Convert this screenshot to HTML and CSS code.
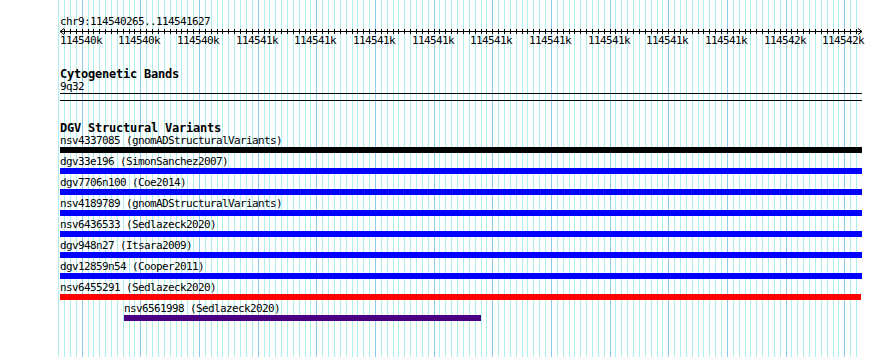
FILE: index.html
```html
<!DOCTYPE html>
<html>
<head>
<meta charset="utf-8">
<link rel="stylesheet" href="styles.css">
</head>
<body>
<div class="panel">
  <svg class="grid" width="890" height="357" viewBox="0 0 890 357" shape-rendering="crispEdges">
    <path class="minor" d="M58.5 0V357M64.5 0V357M70.5 0V357M76.5 0V357M88.5 0V357M93.5 0V357M99.5 0V357M105.5 0V357M111.5 0V357M117.5 0V357M123.5 0V357M129.5 0V357M134.5 0V357M146.5 0V357M152.5 0V357M158.5 0V357M164.5 0V357M170.5 0V357M176.5 0V357M181.5 0V357M187.5 0V357M193.5 0V357M205.5 0V357M211.5 0V357M217.5 0V357M222.5 0V357M228.5 0V357M234.5 0V357M240.5 0V357M246.5 0V357M252.5 0V357M264.5 0V357M269.5 0V357M275.5 0V357M281.5 0V357M287.5 0V357M293.5 0V357M299.5 0V357M305.5 0V357M310.5 0V357M322.5 0V357M328.5 0V357M334.5 0V357M340.5 0V357M346.5 0V357M352.5 0V357M357.5 0V357M363.5 0V357M369.5 0V357M381.5 0V357M387.5 0V357M393.5 0V357M398.5 0V357M404.5 0V357M410.5 0V357M416.5 0V357M422.5 0V357M428.5 0V357M439.5 0V357M445.5 0V357M451.5 0V357M457.5 0V357M463.5 0V357M469.5 0V357M475.5 0V357M481.5 0V357M486.5 0V357M498.5 0V357M504.5 0V357M510.5 0V357M516.5 0V357M522.5 0V357M527.5 0V357M533.5 0V357M539.5 0V357M545.5 0V357M557.5 0V357M563.5 0V357M569.5 0V357M574.5 0V357M580.5 0V357M586.5 0V357M592.5 0V357M598.5 0V357M604.5 0V357M615.5 0V357M621.5 0V357M627.5 0V357M633.5 0V357M639.5 0V357M645.5 0V357M651.5 0V357M657.5 0V357M662.5 0V357M674.5 0V357M680.5 0V357M686.5 0V357M692.5 0V357M698.5 0V357M703.5 0V357M709.5 0V357M715.5 0V357M721.5 0V357M733.5 0V357M739.5 0V357M745.5 0V357M750.5 0V357M756.5 0V357M762.5 0V357M768.5 0V357M774.5 0V357M780.5 0V357M791.5 0V357M797.5 0V357M803.5 0V357M809.5 0V357M815.5 0V357M821.5 0V357M827.5 0V357M833.5 0V357M838.5 0V357M850.5 0V357M856.5 0V357"/>
    <path class="major" d="M82.5 0V357M140.5 0V357M199.5 0V357M258.5 0V357M316.5 0V357M375.5 0V357M434.5 0V357M492.5 0V357M551.5 0V357M610.5 0V357M668.5 0V357M727.5 0V357M786.5 0V357M844.5 0V357"/>
  </svg>
  <div class="content">
    <div class="locus txt">chr9:114540265..114541627</div>
    <svg class="ruler" width="890" height="20" viewBox="0 0 890 20">
      <path class="rline" shape-rendering="crispEdges" d="M60 3.5H862"/>
      <path class="rline" shape-rendering="crispEdges" d="M64.5 1V6M70.5 1V6M76.5 1V6M82.5 1V6M88.5 1V6M93.5 1V6M99.5 1V6M105.5 1V6M111.5 1V6M117.5 1V6M123.5 1V6M129.5 1V6M134.5 1V6M140.5 1V6M146.5 1V6M152.5 1V6M158.5 1V6M164.5 1V6M170.5 1V6M176.5 1V6M181.5 1V6M187.5 1V6M193.5 1V6M199.5 1V6M205.5 1V6M211.5 1V6M217.5 1V6M222.5 1V6M228.5 1V6M234.5 1V6M240.5 1V6M246.5 1V6M252.5 1V6M258.5 1V6M264.5 1V6M269.5 1V6M275.5 1V6M281.5 1V6M287.5 1V6M293.5 1V6M299.5 1V6M305.5 1V6M310.5 1V6M316.5 1V6M322.5 1V6M328.5 1V6M334.5 1V6M340.5 1V6M346.5 1V6M352.5 1V6M357.5 1V6M363.5 1V6M369.5 1V6M375.5 1V6M381.5 1V6M387.5 1V6M393.5 1V6M398.5 1V6M404.5 1V6M410.5 1V6M416.5 1V6M422.5 1V6M428.5 1V6M434.5 1V6M439.5 1V6M445.5 1V6M451.5 1V6M457.5 1V6M463.5 1V6M469.5 1V6M475.5 1V6M481.5 1V6M486.5 1V6M492.5 1V6M498.5 1V6M504.5 1V6M510.5 1V6M516.5 1V6M522.5 1V6M527.5 1V6M533.5 1V6M539.5 1V6M545.5 1V6M551.5 1V6M557.5 1V6M563.5 1V6M569.5 1V6M574.5 1V6M580.5 1V6M586.5 1V6M592.5 1V6M598.5 1V6M604.5 1V6M610.5 1V6M615.5 1V6M621.5 1V6M627.5 1V6M633.5 1V6M639.5 1V6M645.5 1V6M651.5 1V6M657.5 1V6M662.5 1V6M668.5 1V6M674.5 1V6M680.5 1V6M686.5 1V6M692.5 1V6M698.5 1V6M703.5 1V6M709.5 1V6M715.5 1V6M721.5 1V6M727.5 1V6M733.5 1V6M739.5 1V6M745.5 1V6M750.5 1V6M756.5 1V6M762.5 1V6M768.5 1V6M774.5 1V6M780.5 1V6M786.5 1V6M791.5 1V6M797.5 1V6M803.5 1V6M809.5 1V6M815.5 1V6M821.5 1V6M827.5 1V6M833.5 1V6M838.5 1V6M844.5 1V6M850.5 1V6M856.5 1V6"/>
      <path class="rline" d="M64 0.5L60 3.5L64 6.5M858 0.5L862 3.5L858 6.5"/>
      <text class="rtxt" x="60" y="16">114540k</text>
      <text class="rtxt" x="118" y="16">114540k</text>
      <text class="rtxt" x="177" y="16">114540k</text>
      <text class="rtxt" x="236" y="16">114541k</text>
      <text class="rtxt" x="294" y="16">114541k</text>
      <text class="rtxt" x="353" y="16">114541k</text>
      <text class="rtxt" x="412" y="16">114541k</text>
      <text class="rtxt" x="470" y="16">114541k</text>
      <text class="rtxt" x="529" y="16">114541k</text>
      <text class="rtxt" x="588" y="16">114541k</text>
      <text class="rtxt" x="646" y="16">114541k</text>
      <text class="rtxt" x="705" y="16">114541k</text>
      <text class="rtxt" x="764" y="16">114542k</text>
      <text class="rtxt" x="822" y="16">114542k</text>
    </svg>

    <section class="track cyto">
      <div class="title">Cytogenetic Bands</div>
      <div class="txt">9q32</div>
      <div class="band"></div>
    </section>

    <section class="track dgv">
      <div class="title">DGV Structural Variants</div>
      <div class="features">
        <div class="feature">
          <div class="txt">nsv4337085 (gnomADStructuralVariants)</div>
          <div class="bar black"></div>
        </div>
        <div class="feature">
          <div class="txt">dgv33e196 (SimonSanchez2007)</div>
          <div class="bar blue"></div>
        </div>
        <div class="feature">
          <div class="txt">dgv7706n100 (Coe2014)</div>
          <div class="bar blue"></div>
        </div>
        <div class="feature">
          <div class="txt">nsv4189789 (gnomADStructuralVariants)</div>
          <div class="bar blue"></div>
        </div>
        <div class="feature">
          <div class="txt">nsv6436533 (Sedlazeck2020)</div>
          <div class="bar blue"></div>
        </div>
        <div class="feature">
          <div class="txt">dgv948n27 (Itsara2009)</div>
          <div class="bar blue"></div>
        </div>
        <div class="feature">
          <div class="txt">dgv12859n54 (Cooper2011)</div>
          <div class="bar blue"></div>
        </div>
        <div class="feature">
          <div class="txt">nsv6455291 (Sedlazeck2020)</div>
          <div class="bar red" style="width:801px"></div>
        </div>
        <div class="feature" style="margin-left:64px">
          <div class="txt">nsv6561998 (Sedlazeck2020)</div>
          <div class="bar purple" style="width:357px"></div>
        </div>
      </div>
    </section>
  </div>
</div>
</body>
</html>
```

FILE: styles.css
```css
html, body {
  margin: 0;
  padding: 0;
  background: #ffffff;
}

.panel {
  position: relative;
  width: 890px;
  height: 357px;
  overflow: hidden;
  background: #ffffff;
}

.grid {
  position: absolute;
  left: 0;
  top: 0;
  z-index: 0;
}

.grid .minor {
  stroke: #aeeeee;
  stroke-width: 1;
  fill: none;
}

.grid .major {
  stroke: #8ccbee;
  stroke-width: 1;
  fill: none;
}

.content {
  position: relative;
  z-index: 1;
  padding-top: 15px;
  display: flex;
  flex-direction: column;
}

.txt {
  font-family: "DejaVu Sans Mono", "Liberation Mono", monospace;
  font-size: 11px;
  line-height: 13px;
  letter-spacing: -0.62px;
  color: #000000;
  white-space: pre;
}

.locus {
  padding-left: 60px;
}

.ruler {
  display: block;
}

.rline {
  stroke: #000000;
  stroke-width: 1;
  fill: none;
}

.rtxt {
  font-family: "DejaVu Sans Mono", "Liberation Mono", monospace;
  font-size: 11px;
  letter-spacing: -0.62px;
  fill: #000000;
}

.track {
  padding-left: 60px;
  display: flex;
  flex-direction: column;
  align-items: flex-start;
}

.title {
  font-family: "DejaVu Sans Mono", "Liberation Mono", monospace;
  font-weight: bold;
  font-size: 12px;
  line-height: 12px;
  letter-spacing: -0.22px;
  color: #000000;
  white-space: pre;
}

.cyto {
  margin-top: 20px;
}

.band {
  width: 802px;
  height: 6px;
  border-top: 1px solid #000000;
  border-bottom: 1px solid #000000;
}

.dgv {
  margin-top: 21px;
}

.features {
  display: flex;
  flex-direction: column;
  align-items: flex-start;
  gap: 3px;
  margin-top: 1px;
}

.feature {
  display: flex;
  flex-direction: column;
  align-items: flex-start;
}

.feature .txt {
  line-height: 12px;
}

.bar {
  width: 802px;
  height: 6px;
}

.bar.black { background: #000000; }
.bar.blue { background: #0000ff; }
.bar.red { background: #ff0000; }
.bar.purple { background: #4b0082; }
```
